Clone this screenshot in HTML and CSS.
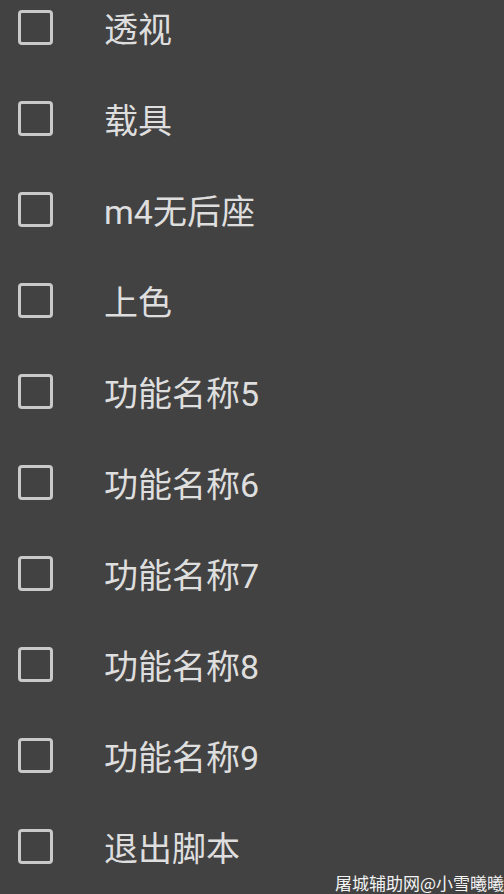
FILE: index.html
```html
<!DOCTYPE html>
<html lang="zh-CN">
<head>
  <meta charset="UTF-8">
  <meta name="viewport" content="width=device-width, initial-scale=1.0">
  <title>功能菜单</title>
  <link rel="stylesheet" href="styles.css">
</head>
<body>
  <!-- Feature toggles -->
  <ul class="menu">
    <li class="menu-item"><span class="check"></span><span class="label">透视</span></li>
    <li class="menu-item"><span class="check"></span><span class="label">载具</span></li>
    <li class="menu-item"><span class="check"></span><span class="label">m4无后座</span></li>
    <li class="menu-item"><span class="check"></span><span class="label">上色</span></li>
    <li class="menu-item"><span class="check"></span><span class="label">功能名称5</span></li>
    <li class="menu-item"><span class="check"></span><span class="label">功能名称6</span></li>
    <li class="menu-item"><span class="check"></span><span class="label">功能名称7</span></li>
    <li class="menu-item"><span class="check"></span><span class="label">功能名称8</span></li>
    <li class="menu-item"><span class="check"></span><span class="label">功能名称9</span></li>
    <li class="menu-item"><span class="check"></span><span class="label">退出脚本</span></li>
  </ul>

  <div class="watermark">屠城辅助网@小雪曦曦</div>
</body>
</html>
```

FILE: styles.css
```css
html, body {
  height: 100%;
}
body {
  margin: 0;
  background-color: #424242;
  font-family: Roboto, "Noto Sans CJK SC", sans-serif;
  overflow: hidden;
  position: relative;
}
.menu {
  list-style: none;
  margin: -18px 0 0 0;
  padding: 0;
}
.menu-item {
  display: flex;
  align-items: center;
  height: 91px;
  padding-left: 18px;
  gap: 51px;
}
.check {
  box-sizing: border-box;
  width: 35px;
  height: 35px;
  border: 3px solid #c9c9c9;
  border-radius: 4px;
  flex-shrink: 0;
}
.label {
  color: #dedede;
  font-size: 34px;
  line-height: 1;
  padding-top: 4px;
}
.watermark {
  position: absolute;
  right: 0;
  bottom: 3px;
  color: #f2f2f2;
  font-family: "Noto Sans CJK SC", sans-serif;
  font-size: 17px;
  line-height: 1;
}
```
